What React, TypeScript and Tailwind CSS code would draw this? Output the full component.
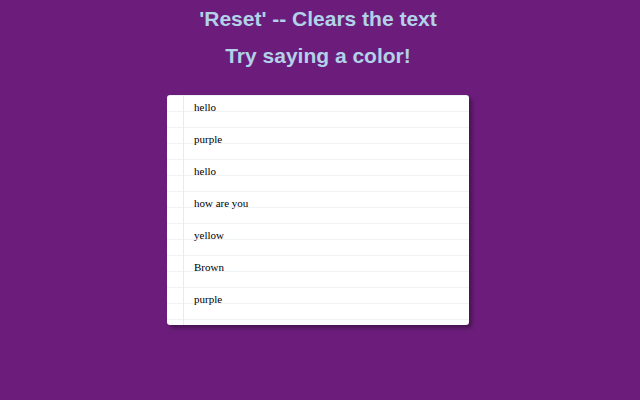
const items = ['hello', 'purple', 'hello', 'how are you', 'yellow', 'Brown', 'purple']

export default function App() {
  return (
    <div className="min-h-[400px] w-full bg-[#6c1d7b] font-['Liberation_Sans',Arial,sans-serif]">
      <div className="flex flex-col items-center pr-[4px] pt-[6px]">
        <h1 className="text-[21px] font-bold leading-[25px] text-[#b1d2e8]">'Reset' -- Clears the text</h1>
        <h2 className="mt-[12px] text-[21px] font-bold leading-[25px] text-[#b1d2e8]">Try saying a color!</h2>
        <div
          className="relative mt-[27px] h-[230px] w-[302px] rounded-[3px] bg-white shadow-[3px_3px_4px_rgba(0,0,0,0.35)] bg-[linear-gradient(to_bottom,transparent_15px,#f0f3f6_15px,#f0f3f6_16px)] bg-[length:100%_16px] bg-[position:0_1px]"
        >
          <div className="absolute bottom-0 left-[16px] top-0 w-px bg-[#eee8ec]" />
          <ul className="pl-[27px] pt-[4px] font-['Liberation_Serif','Times_New_Roman',serif] text-[11px] text-black">
            {items.map((it, i) => (
              <li key={i} className="h-8 leading-4">
                {it}
              </li>
            ))}
          </ul>
        </div>
      </div>
    </div>
  )
}
